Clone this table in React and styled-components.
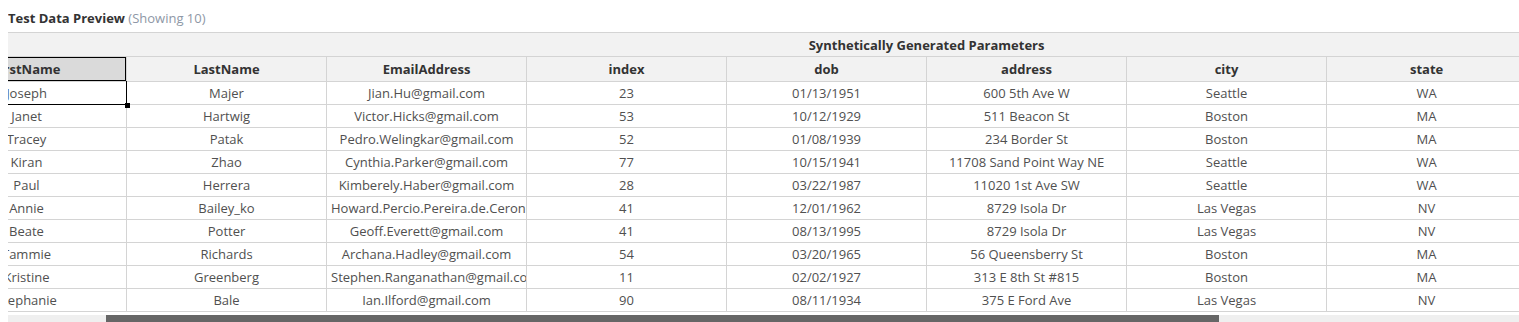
import React, { useLayoutEffect, useRef, useState } from 'react';
import styled, { createGlobalStyle } from 'styled-components';

const GlobalStyle = createGlobalStyle`
    html, body {
        overflow: hidden;
    }
    body {
        margin: 8px 0 0 8px;
        font-family: "Open Sans", "Liberation Sans", sans-serif;
        background: #fff;
    }
`;

const Title = styled.div`
    font-size: 13px;
    line-height: 20px;
    font-weight: 700;
    color: #333;
    margin-bottom: 4px;

    span {
        font-weight: 400;
        color: #8e97a6;
    }
`;

const Scroller = styled.div`
    width: 100%;
    overflow: hidden;
`;

const Track = styled.div`
    display: flex;
    height: 8px;
    margin-top: 3px;
    background: #efefef;
`;

const Thumb = styled.div`
    height: 100%;
    background: #666;
`;

const Table = styled.table`
    border-collapse: collapse;
    table-layout: fixed;
    width: ${p => p.$width}px;
    font-size: 13px;
`;

const GroupCell = styled.th`
    height: 23px;
    padding: 0 4px;
    background: #f2f2f2;
    border-top: 1px solid #d4d4d4;
    border-bottom: 1px solid #d4d4d4;
    font-weight: 700;
    color: #333;
    text-align: center;
`;

const HeadCell = styled.th`
    position: relative;
    height: 24px;
    padding: 0 4px;
    background: ${p => (p.$selected ? '#dadada' : '#f2f2f2')};
    border: 1px solid #d4d4d4;
    font-weight: 700;
    color: #333;
    text-align: center;
    white-space: nowrap;
    overflow: hidden;

    ${p => p.$selected && `
        &::after {
            content: '';
            position: absolute;
            inset: -1px;
            border: 2px solid #000;
        }
    `}
`;

const Cell = styled.td`
    position: relative;
    height: 22px;
    padding: 0 4px;
    border: 1px solid #d4d4d4;
    color: #505050;
    text-align: center;
    white-space: nowrap;
    overflow: ${p => (p.$selected ? 'visible' : 'hidden')};

    ${p => p.$selected && `
        &::after {
            content: '';
            position: absolute;
            inset: -1px;
            border-right: 1px solid #000;
            border-bottom: 1px solid #000;
        }
    `}
`;

const Handle = styled.span`
    position: absolute;
    right: -4px;
    bottom: -4px;
    width: 5px;
    height: 5px;
    background: #000;
    z-index: 2;
`;

const columns = [
    { key: 'row', label: '', width: 51 },
    { key: 'first', label: 'FirstName', width: 200 },
    { key: 'last', label: 'LastName', width: 200 },
    { key: 'email', label: 'EmailAddress', width: 200 },
    { key: 'index', label: 'index', width: 200 },
    { key: 'dob', label: 'dob', width: 200 },
    { key: 'address', label: 'address', width: 200 },
    { key: 'city', label: 'city', width: 200 },
    { key: 'state', label: 'state', width: 200 },
    { key: 'zip', label: 'zip', width: 200 },
    { key: 'phone', label: 'phone', width: 200 },
];

const rows = [
    ['Joseph', 'Majer', 'Jian.Hu@gmail.com', '23', '01/13/1951', '600 5th Ave W', 'Seattle', 'WA', '98119', '206-555-0142'],
    ['Janet', 'Hartwig', 'Victor.Hicks@gmail.com', '53', '10/12/1929', '511 Beacon St', 'Boston', 'MA', '02215', '617-555-0178'],
    ['Tracey', 'Patak', 'Pedro.Welingkar@gmail.com', '52', '01/08/1939', '234 Border St', 'Boston', 'MA', '02128', '617-555-0113'],
    ['Kiran', 'Zhao', 'Cynthia.Parker@gmail.com', '77', '10/15/1941', '11708 Sand Point Way NE', 'Seattle', 'WA', '98125', '206-555-0190'],
    ['Paul', 'Herrera', 'Kimberely.Haber@gmail.com', '28', '03/22/1987', '11020 1st Ave SW', 'Seattle', 'WA', '98146', '206-555-0121'],
    ['Annie', 'Bailey_ko', 'Howard.Percio.Pereira.de.Ceron@gmail.com', '41', '12/01/1962', '8729 Isola Dr', 'Las Vegas', 'NV', '89117', '702-555-0166'],
    ['Beate', 'Potter', 'Geoff.Everett@gmail.com', '41', '08/13/1995', '8729 Isola Dr', 'Las Vegas', 'NV', '89117', '702-555-0104'],
    ['Tammie', 'Richards', 'Archana.Hadley@gmail.com', '54', '03/20/1965', '56 Queensberry St', 'Boston', 'MA', '02215', '617-555-0187'],
    ['Kristine', 'Greenberg', 'Stephen.Ranganathan@gmail.com', '11', '02/02/1927', '313 E 8th St #815', 'Boston', 'MA', '02127', '617-555-0135'],
    ['Stephanie', 'Bale', 'Ian.Ilford@gmail.com', '90', '08/11/1934', '375 E Ford Ave', 'Las Vegas', 'NV', '89123', '702-555-0159'],
];

const tableWidth = columns.reduce((sum, c) => sum + c.width, 0);
const SCROLL_LEFT = 133;

const App = () => {
    const scrollRef = useRef(null);
    const [thumb, setThumb] = useState({ left: 0, width: 0 });

    useLayoutEffect(() => {
        const el = scrollRef.current;
        if (!el) return;
        el.scrollLeft = SCROLL_LEFT;
        const view = el.clientWidth;
        const total = el.scrollWidth;
        setThumb({
            left: (el.scrollLeft / total) * view,
            width: (view / total) * view,
        });
    }, []);

    return (
        <>
            <GlobalStyle />
            <Title>
                Test Data Preview <span>(Showing 10)</span>
            </Title>
            <Scroller ref={scrollRef}>
                <Table $width={tableWidth}>
                    <colgroup>
                        {columns.map(c => <col key={c.key} style={{ width: c.width }} />)}
                    </colgroup>
                    <thead>
                        <tr>
                            <GroupCell colSpan={3} />
                            <GroupCell colSpan={6}>Synthetically Generated Parameters</GroupCell>
                            <GroupCell colSpan={2} />
                        </tr>
                        <tr>
                            {columns.map(c => (
                                <HeadCell key={c.key} $selected={c.key === 'first'}>{c.label}</HeadCell>
                            ))}
                        </tr>
                    </thead>
                    <tbody>
                        {rows.map((r, i) => (
                            <tr key={i}>
                                <Cell>{i + 1}</Cell>
                                {r.map((v, j) => {
                                    const selected = i === 0 && j === 0;
                                    return (
                                        <Cell key={j} $selected={selected}>
                                            {v}
                                            {selected && <Handle />}
                                        </Cell>
                                    );
                                })}
                            </tr>
                        ))}
                    </tbody>
                </Table>
            </Scroller>
            <Track>
                <Thumb style={{ marginLeft: thumb.left, width: thumb.width }} />
            </Track>
        </>
    );
};

export default App;
